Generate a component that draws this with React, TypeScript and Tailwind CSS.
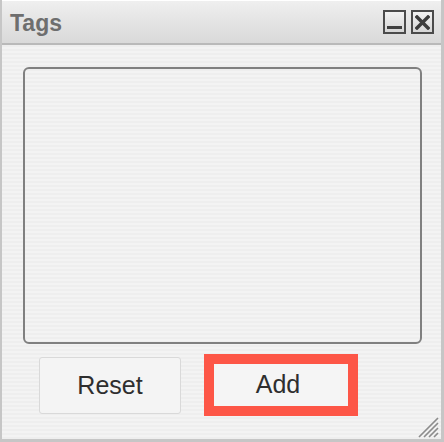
export default function App() {
  const stripes =
    'bg-[repeating-linear-gradient(180deg,#eeeeee_0px,#eeeeee_2px,#f3f3f3_2px,#f3f3f3_4px)]';

  return (
    <div
      className="w-[444px] h-[442px] flex flex-col border-l-2 border-r-[3px] border-b-[3px] border-[#c6c6c6] bg-[#efefef] overflow-hidden"
      style={{ fontFamily: '"Liberation Sans", Arial, sans-serif' }}
    >
      {/* Title bar */}
      <div className="h-[45px] shrink-0 flex items-center justify-between pl-2 pr-[7px] border-t border-white border-b-2 border-b-[#b9b9b9] bg-gradient-to-b from-[#efefef] to-[#d9d9d9]">
        <span className="text-[23px] font-bold text-[#6e6e6e] leading-none mt-[3px]">Tags</span>
        <div className="flex gap-[5px]">
          <button className="w-[23px] h-[24px] border-2 border-[#4b4b4b] bg-gradient-to-b from-[#f2f2f2] to-[#d6d6d6] flex items-end justify-center pb-[3px]">
            <span className="block w-[15px] h-[3px] bg-[#404040]" />
          </button>
          <button className="w-[23px] h-[24px] border-2 border-[#4b4b4b] bg-gradient-to-b from-[#f2f2f2] to-[#d6d6d6] flex items-center justify-center">
            <svg width="15" height="15" viewBox="0 0 15 15">
              <path d="M2 2 L13 13 M13 2 L2 13" stroke="#3c3c3c" strokeWidth="3.4" strokeLinecap="square" />
            </svg>
          </button>
        </div>
      </div>

      {/* Body */}
      <div className={`relative flex-1 flex flex-col pl-[21px] pt-[22px] ${stripes}`}>
        <div className={`w-[399px] h-[277px] border-2 border-[#808080] rounded-[6px] ${stripes}`} />

        <div className="flex items-start mt-[10px] pl-[16px]">
          <button className="mt-[3px] w-[142px] h-[57px] rounded-[3px] border border-[#d9d9d9] bg-[#f4f4f4] text-[25px] text-[#2e2e2e]">
            Reset
          </button>
          <button className="ml-[23px] w-[154px] h-[62px] border-[10px] border-[#fd5647] bg-[#f5f5f5] text-[25px] text-[#2e2e2e] pr-[6px]">
            Add
          </button>
        </div>

        {/* Resize grip */}
        <svg className="absolute right-[2px] bottom-[1px]" width="24" height="24" viewBox="0 0 24 24">
          <path
            d="M23 4 L4 23 M23 9 L9 23 M23 14 L14 23 M23 19 L19 23"
            stroke="#8c8c8c"
            strokeWidth="1.7"
          />
        </svg>
      </div>
    </div>
  );
}
